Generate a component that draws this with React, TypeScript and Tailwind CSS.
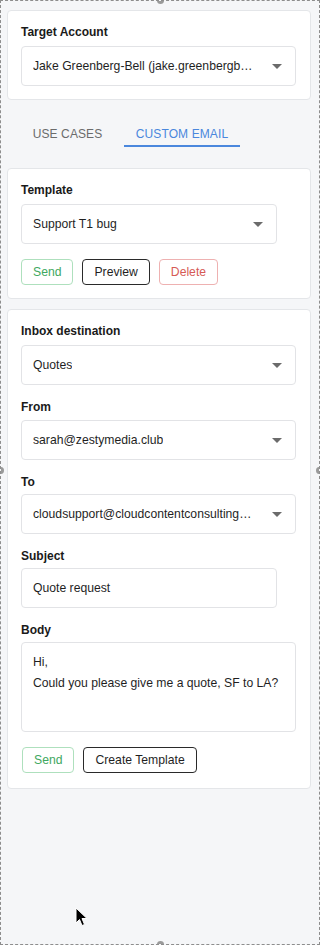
import React from "react";

function Caret() {
  return (
    <svg width="10" height="5" viewBox="0 0 10 5" className="flex-shrink-0">
      <path d="M0 0 L10 0 L5 5 Z" fill="#6b6b6b" />
    </svg>
  );
}

function Label({ children, className = "" }: { children: React.ReactNode; className?: string }) {
  return <div className={`text-[12px] leading-[16px] font-bold text-[#1a1a1a] ${className}`}>{children}</div>;
}

function Select({ value, wide = true }: { value: string; wide?: boolean }) {
  return (
    <div
      className={`flex items-center justify-between h-[40px] ${wide ? "w-[275px]" : "w-[256px]"} bg-white border border-[#e2e3e6] rounded-[4px] pl-[11px] pr-[13px]`}
    >
      <span className="text-[12.2px] text-[#1f1f1f] whitespace-nowrap overflow-hidden">{value}</span>
      <Caret />
    </div>
  );
}

function Card({ children, className = "" }: { children: React.ReactNode; className?: string }) {
  return (
    <div className={`bg-white border border-[#e4e6e9] rounded-[4px] px-[13px] pt-[13px] ${className}`}>{children}</div>
  );
}

function Btn({ children, kind }: { children: React.ReactNode; kind: "send" | "plain" | "delete" }) {
  const styles = {
    send: "border-[#aee0bd] text-[#3ea860]",
    plain: "border-[#2a2a2a] text-[#1f1f1f]",
    delete: "border-[#eeb1b1] text-[#d65a56]",
  };
  return (
    <button className={`h-[26px] px-[11px] border rounded-[4px] bg-white text-[12.2px] leading-none ${styles[kind]}`}>
      {children}
    </button>
  );
}

function Handle({ className }: { className: string }) {
  return <div className={`absolute w-[7px] h-[7px] rounded-full bg-[#9a9a9a] ${className}`} />;
}

export default function App() {
  return (
    <div className="relative w-[320px] h-[945px] overflow-hidden bg-[#f5f6f8] border border-dashed border-[#8d8d8d] font-['Liberation_Sans',Arial,sans-serif]">
      <Handle className="left-[156px] -top-[4px]" />
      <Handle className="left-[156px] -bottom-[4px]" />
      <Handle className="-left-[4px] top-[466px]" />
      <Handle className="-right-[4px] top-[466px]" />

      <div className="pl-[6px] pr-[8px] pt-[9px]">
        <Card className="pb-[13px]">
          <Label className="mb-[6px]">Target Account</Label>
          <Select value="Jake Greenberg-Bell (jake.greenbergb…" />
        </Card>

        <div className="flex gap-[10px] pl-[14px] mt-[11px] h-[36px]">
          <div className="w-[93px] flex items-end justify-center pb-[7px] text-[12px] leading-none text-[#6b6b6b] tracking-[0.1px]">
            USE CASES
          </div>
          <div className="w-[116px] flex items-end justify-center pb-[5px] text-[12px] leading-none text-[#4a87dd] border-b-2 border-[#4a87dd] tracking-[0.1px]">
            CUSTOM EMAIL
          </div>
        </div>

        <Card className="mt-[21px] pb-[13px]">
          <Label className="mb-[6px]">Template</Label>
          <Select value="Support T1 bug" wide={false} />
          <div className="flex gap-[9px] mt-[15px]">
            <Btn kind="send">Send</Btn>
            <Btn kind="plain">Preview</Btn>
            <Btn kind="delete">Delete</Btn>
          </div>
        </Card>

        <Card className="mt-[10px] pb-[15px]">
          <Label className="mb-[6px]">Inbox destination</Label>
          <Select value="Quotes" />
          <Label className="mt-[14px] mb-[5px]">From</Label>
          <Select value="sarah@zestymedia.club" />
          <Label className="mt-[14px] mb-[4px]">To</Label>
          <Select value="cloudsupport@cloudcontentconsulting…" />
          <Label className="mt-[14px] mb-[4px]">Subject</Label>
          <div className="h-[40px] w-[256px] bg-white border border-[#e2e3e6] rounded-[4px] pl-[11px] flex items-center text-[12.2px] text-[#1f1f1f]">
            Quote request
          </div>
          <Label className="mt-[14px] mb-[4px]">Body</Label>
          <div className="h-[90px] w-[275px] bg-white border border-[#e2e3e6] rounded-[4px] pl-[11px] pt-[9px] text-[12.2px] leading-[21px] text-[#1f1f1f]">
            <div>Hi,</div>
            <div>Could you please give me a quote, SF to LA?</div>
          </div>
          <div className="flex gap-[9px] mt-[15px] pl-[1px]">
            <Btn kind="send">Send</Btn>
            <Btn kind="plain">Create Template</Btn>
          </div>
        </Card>
      </div>

      <svg className="absolute left-[74px] top-[906px]" width="14" height="21" viewBox="0 0 14 21">
        <path d="M1 1 L1 16 L4.5 12.5 L7 18.5 L9.5 17.5 L7 11.5 L12 11.5 Z" fill="#000" stroke="#fff" strokeWidth="1" />
      </svg>
    </div>
  );
}
